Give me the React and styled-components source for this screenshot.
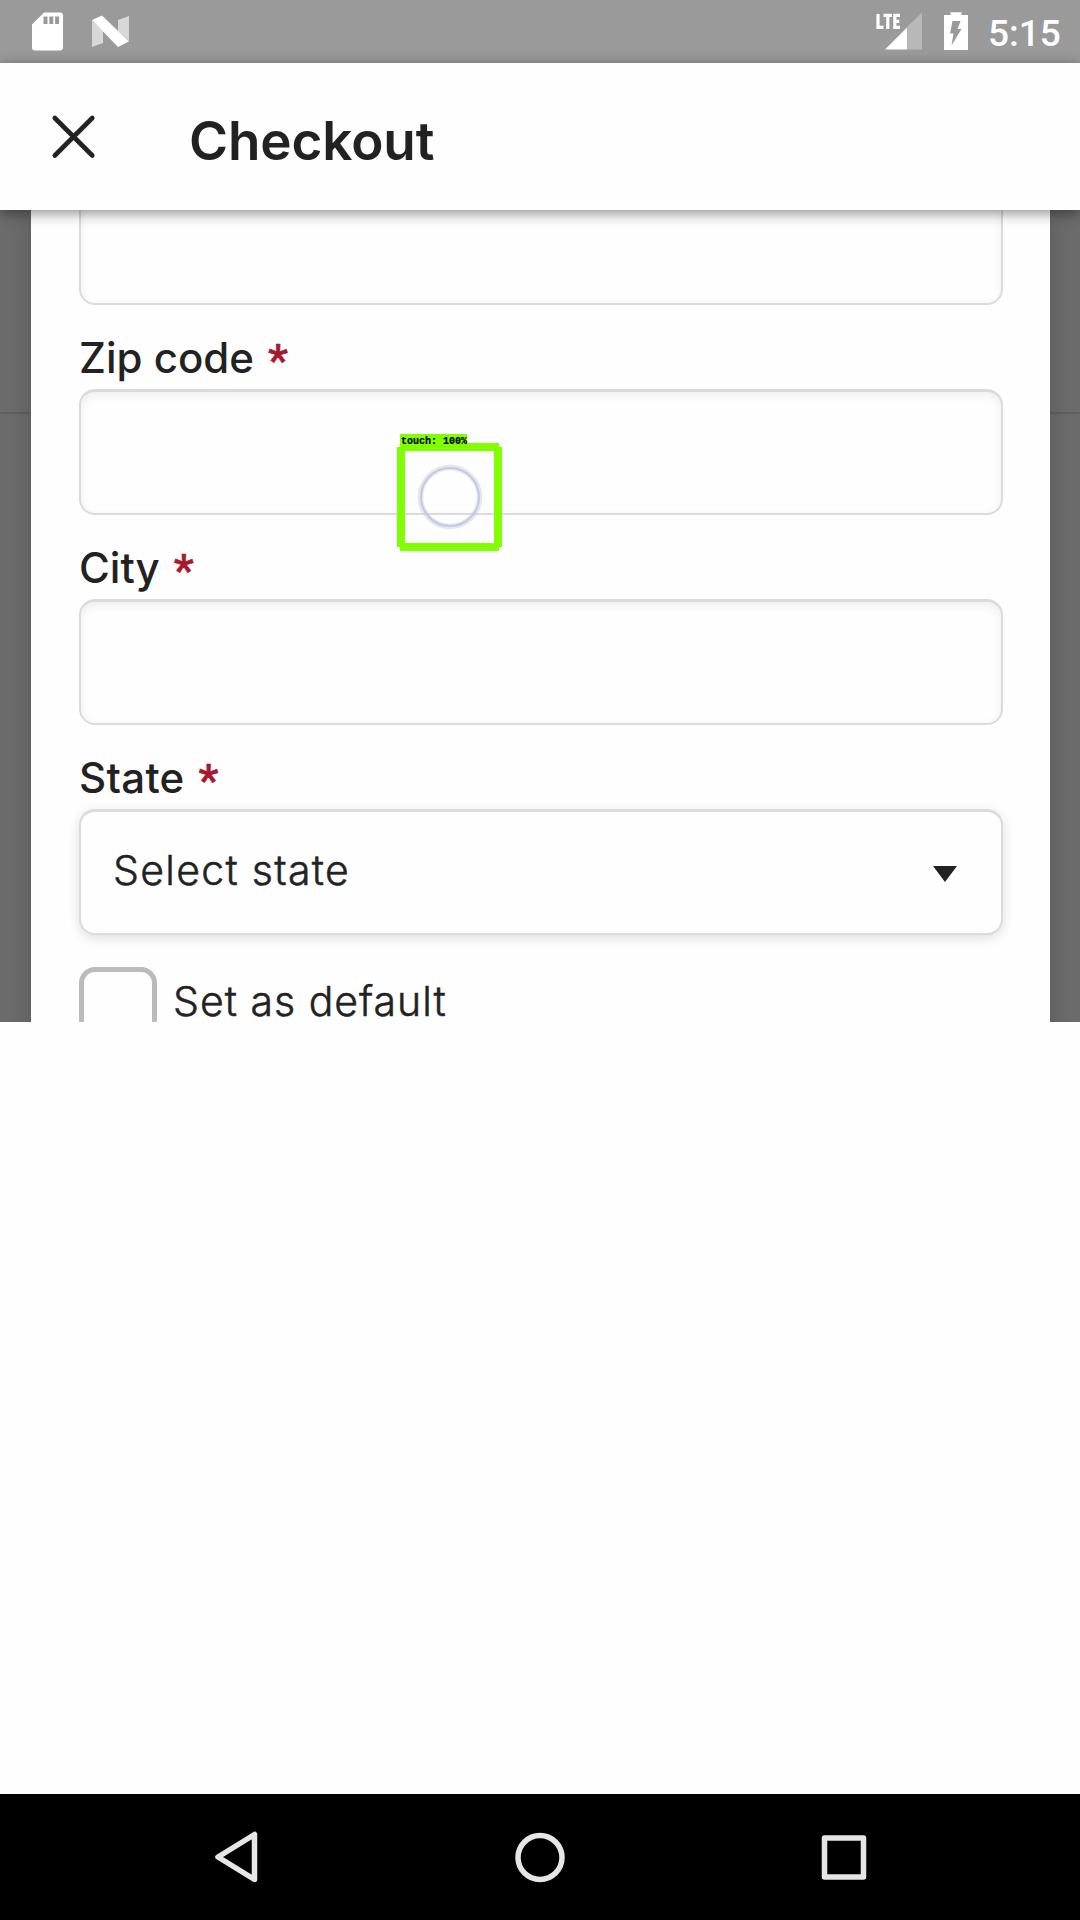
import React from "react";
import styled, { createGlobalStyle } from "styled-components";

const GlobalStyle = createGlobalStyle`
  * { box-sizing: border-box; }
  body { margin: 0; background: #fefefe; }
`;

const Screen = styled.div`
  position: relative;
  display: flex;
  flex-direction: column;
  width: 1080px;
  height: 1920px;
  overflow: hidden;
  background: #fefefe;
  color: #222;
  font-family: Inter, "Liberation Sans", sans-serif;
`;

const StatusBar = styled.div`
  display: flex;
  justify-content: space-between;
  height: 63px;
  flex: none;
  padding: 0 21px 0 32px;
  background: #9a9a9a;
`;

const StatusGroup = styled.div`
  display: flex;
  align-items: flex-start;
  gap: ${(p) => p.$gap}px;
  padding-top: 12px;
`;

const StatusIcon = styled.svg`
  display: block;
  flex: none;
`;

const Clock = styled.span`
  width: 71px;
  margin-left: -1px;
  padding-top: 2px;
  font: 500 37px/40px Roboto, sans-serif;
  letter-spacing: 0;
  color: #fff;
`;

const Header = styled.header`
  position: relative;
  z-index: 1;
  display: flex;
  align-items: flex-start;
  flex: none;
  height: 147px;
  padding: 50px 50px 0;
  gap: 91px;
  background: #fefefe;
  box-shadow: 0 3px 13px rgba(0, 0, 0, 0.45);
`;

const Title = styled.h1`
  margin: 0;
  font-size: 53px;
  font-weight: 600;
  line-height: 56px;
  letter-spacing: -0.1px;
`;

const Backdrop = styled.main`
  display: flex;
  flex: none;
  height: 812px;
  overflow: hidden;
  padding: 0 30px 0 31px;
  background: linear-gradient(#5f5f5f, #5f5f5f) 0 202px / 100% 2px no-repeat, #6c6c6c;
`;

const Sheet = styled.div`
  display: flex;
  flex-direction: column;
  flex: 1;
  height: 900px;
  padding: 0 47px 0 48px;
  background: #fefefe;
  box-shadow: 0 0 26px rgba(0, 0, 0, 0.18);
`;

const Field = styled.div`
  display: flex;
  flex-direction: column;
  flex: none;
  height: 210px;
`;

const Label = styled.label`
  display: flex;
  align-items: flex-start;
  height: 84px;
  padding-top: 28px;
  gap: 14px;
  font-size: 42px;
  font-weight: 500;
  line-height: 50px;
  letter-spacing: ${(p) => p.$tracking}px;
  white-space: nowrap;
`;

const Required = styled.span`
  padding-top: 3px;
  color: #a6192e;
  font: 500 45px/50px Roboto, sans-serif;
  letter-spacing: 0;
  -webkit-text-stroke: 0.6px #a6192e;
`;

const TextBox = styled.div`
  flex: none;
  height: 126px;
  margin-top: ${(p) => p.$offset || 0}px;
  border: 2px solid #dbdbdb;
  border-top-width: 3px;
  border-radius: 16px;
  background: #fefefe;
  box-shadow: inset 0 3px 10px rgba(0, 0, 0, 0.07);
`;

const Select = styled.div`
  display: flex;
  align-items: center;
  justify-content: space-between;
  height: 126px;
  padding: 0 44px 6px 32px;
  border: 2px solid #dbdbdb;
  border-top-width: 3px;
  border-radius: 16px;
  background: #fefefe;
  box-shadow: 0 3px 12px rgba(0, 0, 0, 0.13);
`;

const Body = styled.span`
  padding-top: ${(p) => p.$drop || 0}px;
  font-size: 41px;
  font-weight: 300;
  line-height: 50px;
  letter-spacing: ${(p) => p.$tracking}px;
  -webkit-text-stroke: 0.5px #222;
  white-space: nowrap;
`;

const Caret = styled.svg`
  display: block;
  margin-top: 9px;
`;

const CheckRow = styled.div`
  display: flex;
  align-items: flex-start;
  gap: 16px;
  padding-top: 32px;
`;

const CheckBox = styled.div`
  width: 78px;
  height: 78px;
  border: 5px solid #bbb;
  border-radius: 16px;
`;

const Blank = styled.div`
  flex: 1;
`;

const NavBar = styled.nav`
  display: flex;
  align-items: center;
  justify-content: space-between;
  flex: none;
  height: 126px;
  padding: 0 206px;
  background: #000;
`;

const TouchMarker = styled.div`
  position: absolute;
  z-index: 2;
  left: 397px;
  top: 434px;
  width: 105px;
`;

const TouchTag = styled.div`
  width: 67px;
  height: 11px;
  padding-left: 1px;
  margin-left: 3px;
  background: #80ff00;
  color: #000;
  font: 700 10px/15px "Liberation Mono", monospace;
  -webkit-text-stroke: 0.2px #000;
  white-space: pre;
  position: relative;
  z-index: 1;
`;

const TouchFrame = styled.svg`
  display: block;
  margin-top: -2px;
`;

function FormField({ label, tracking, children }) {
  return (
    <Field>
      <Label $tracking={tracking}>
        {label}
        <Required>*</Required>
      </Label>
      {children}
    </Field>
  );
}

function NavIcon({ children }) {
  return (
    <svg width="60" height="60" viewBox="0 0 60 60" fill="none" stroke="#e6e6e6" strokeWidth="5.500" strokeLinejoin="round">
      {children}
    </svg>
  );
}

export default function App() {
  return (
    <Screen>
      <GlobalStyle />
      <StatusBar>
        <StatusGroup $gap={28}>
          <StatusIcon width="31" height="39" viewBox="0 0 31 39">
            <path fill="#fff" fillRule="evenodd" d="M12 .5H28Q31 .5 31 3.5V35.500Q31 38.500 28 38.500H3Q0 38.500 0 35.500V12.500ZM11.500 4.500V12H15.500V4.500ZM17.300 4.500V12H21.300V4.500ZM23.100 4.500V12H27.100V4.500Z" />
          </StatusIcon>
          <StatusIcon width="40" height="39" viewBox="0 0 40 39">
            <path fill="#fff" opacity=".62" d="M1 8 12 19V31L1 35ZM27 8 38 4V29L27 19Z" />
            <path fill="#fff" d="M1 8 11 3.500 38 29.500 27 35Z" />
          </StatusIcon>
        </StatusGroup>
        <StatusGroup $gap={20}>
          <StatusIcon width="47" height="39" viewBox="0 0 47 39">
            <path fill="#fff" opacity=".3" d="M46 .5V37.500H31V15Z" />
            <path fill="#fff" d="M31 15.500V37.500H9Z" />
            <path fill="none" stroke="#fff" strokeWidth="3.200" d="M2 2V15.300H7.500M7.500 3.400H16M11.800 3.400V17M24 3.400H18.800V15.300H24M18.800 9.300H23.300" />
          </StatusIcon>
          <StatusIcon width="26" height="39" viewBox="0 0 26 39">
            <path fill="#fff" fillRule="evenodd" d="M7.500 .2H18.500V3H25V38H1V3H7.500ZM9.500 9H17.500L14.500 17H18.500L8.500 33.500L10.500 21.500H7Z" />
          </StatusIcon>
          <Clock>5:15</Clock>
        </StatusGroup>
      </StatusBar>

      <Header>
        <svg width="48" height="48" viewBox="0 0 48 48" fill="none" stroke="#222" strokeWidth="4.600" strokeLinecap="round">
          <path d="M4.800 5 42.300 42.500M42.300 5 4.800 42.500" />
        </svg>
        <Title>Checkout</Title>
      </Header>

      <Backdrop>
        <Sheet>
          <TextBox $offset={-31} />
          <FormField label="Zip code" tracking={0}>
            <TextBox />
          </FormField>
          <FormField label="City" tracking={0}>
            <TextBox />
          </FormField>
          <FormField label="State" tracking={0.3}>
            <Select>
              <Body $tracking={1.3}>Select state</Body>
              <Caret width="24" height="16" viewBox="0 0 24 16">
                <path fill="#222" d="M0 0H24L12 16Z" />
              </Caret>
            </Select>
          </FormField>
          <CheckRow>
            <CheckBox />
            <Body $tracking={1} $drop={9}>Set as default</Body>
          </CheckRow>
        </Sheet>
      </Backdrop>

      <Blank />

      <NavBar>
        <NavIcon><path d="M48.500 7.500V52.500L12 30Z" /></NavIcon>
        <NavIcon><circle cx="30" cy="30.500" r="22" /></NavIcon>
        <NavIcon><rect x="10.500" y="11" width="39" height="39" /></NavIcon>
      </NavBar>

      <TouchMarker>
        <TouchTag>touch: 100%</TouchTag>
        <TouchFrame width="105" height="108" viewBox="0 0 105 108" fill="none">
          <path fill="#80ff00" fillRule="evenodd" d="M3 0H102V4H105V104H102V108H3V104H0V4H3ZM8 8V100H97V8Z" />
          <circle cx="53" cy="54" r="29.500" stroke="#c5c9e8" strokeWidth="5.500" opacity=".45" />
          <circle cx="53" cy="54" r="29" stroke="#c6c8dd" strokeWidth="2" />
        </TouchFrame>
      </TouchMarker>
    </Screen>
  );
}
